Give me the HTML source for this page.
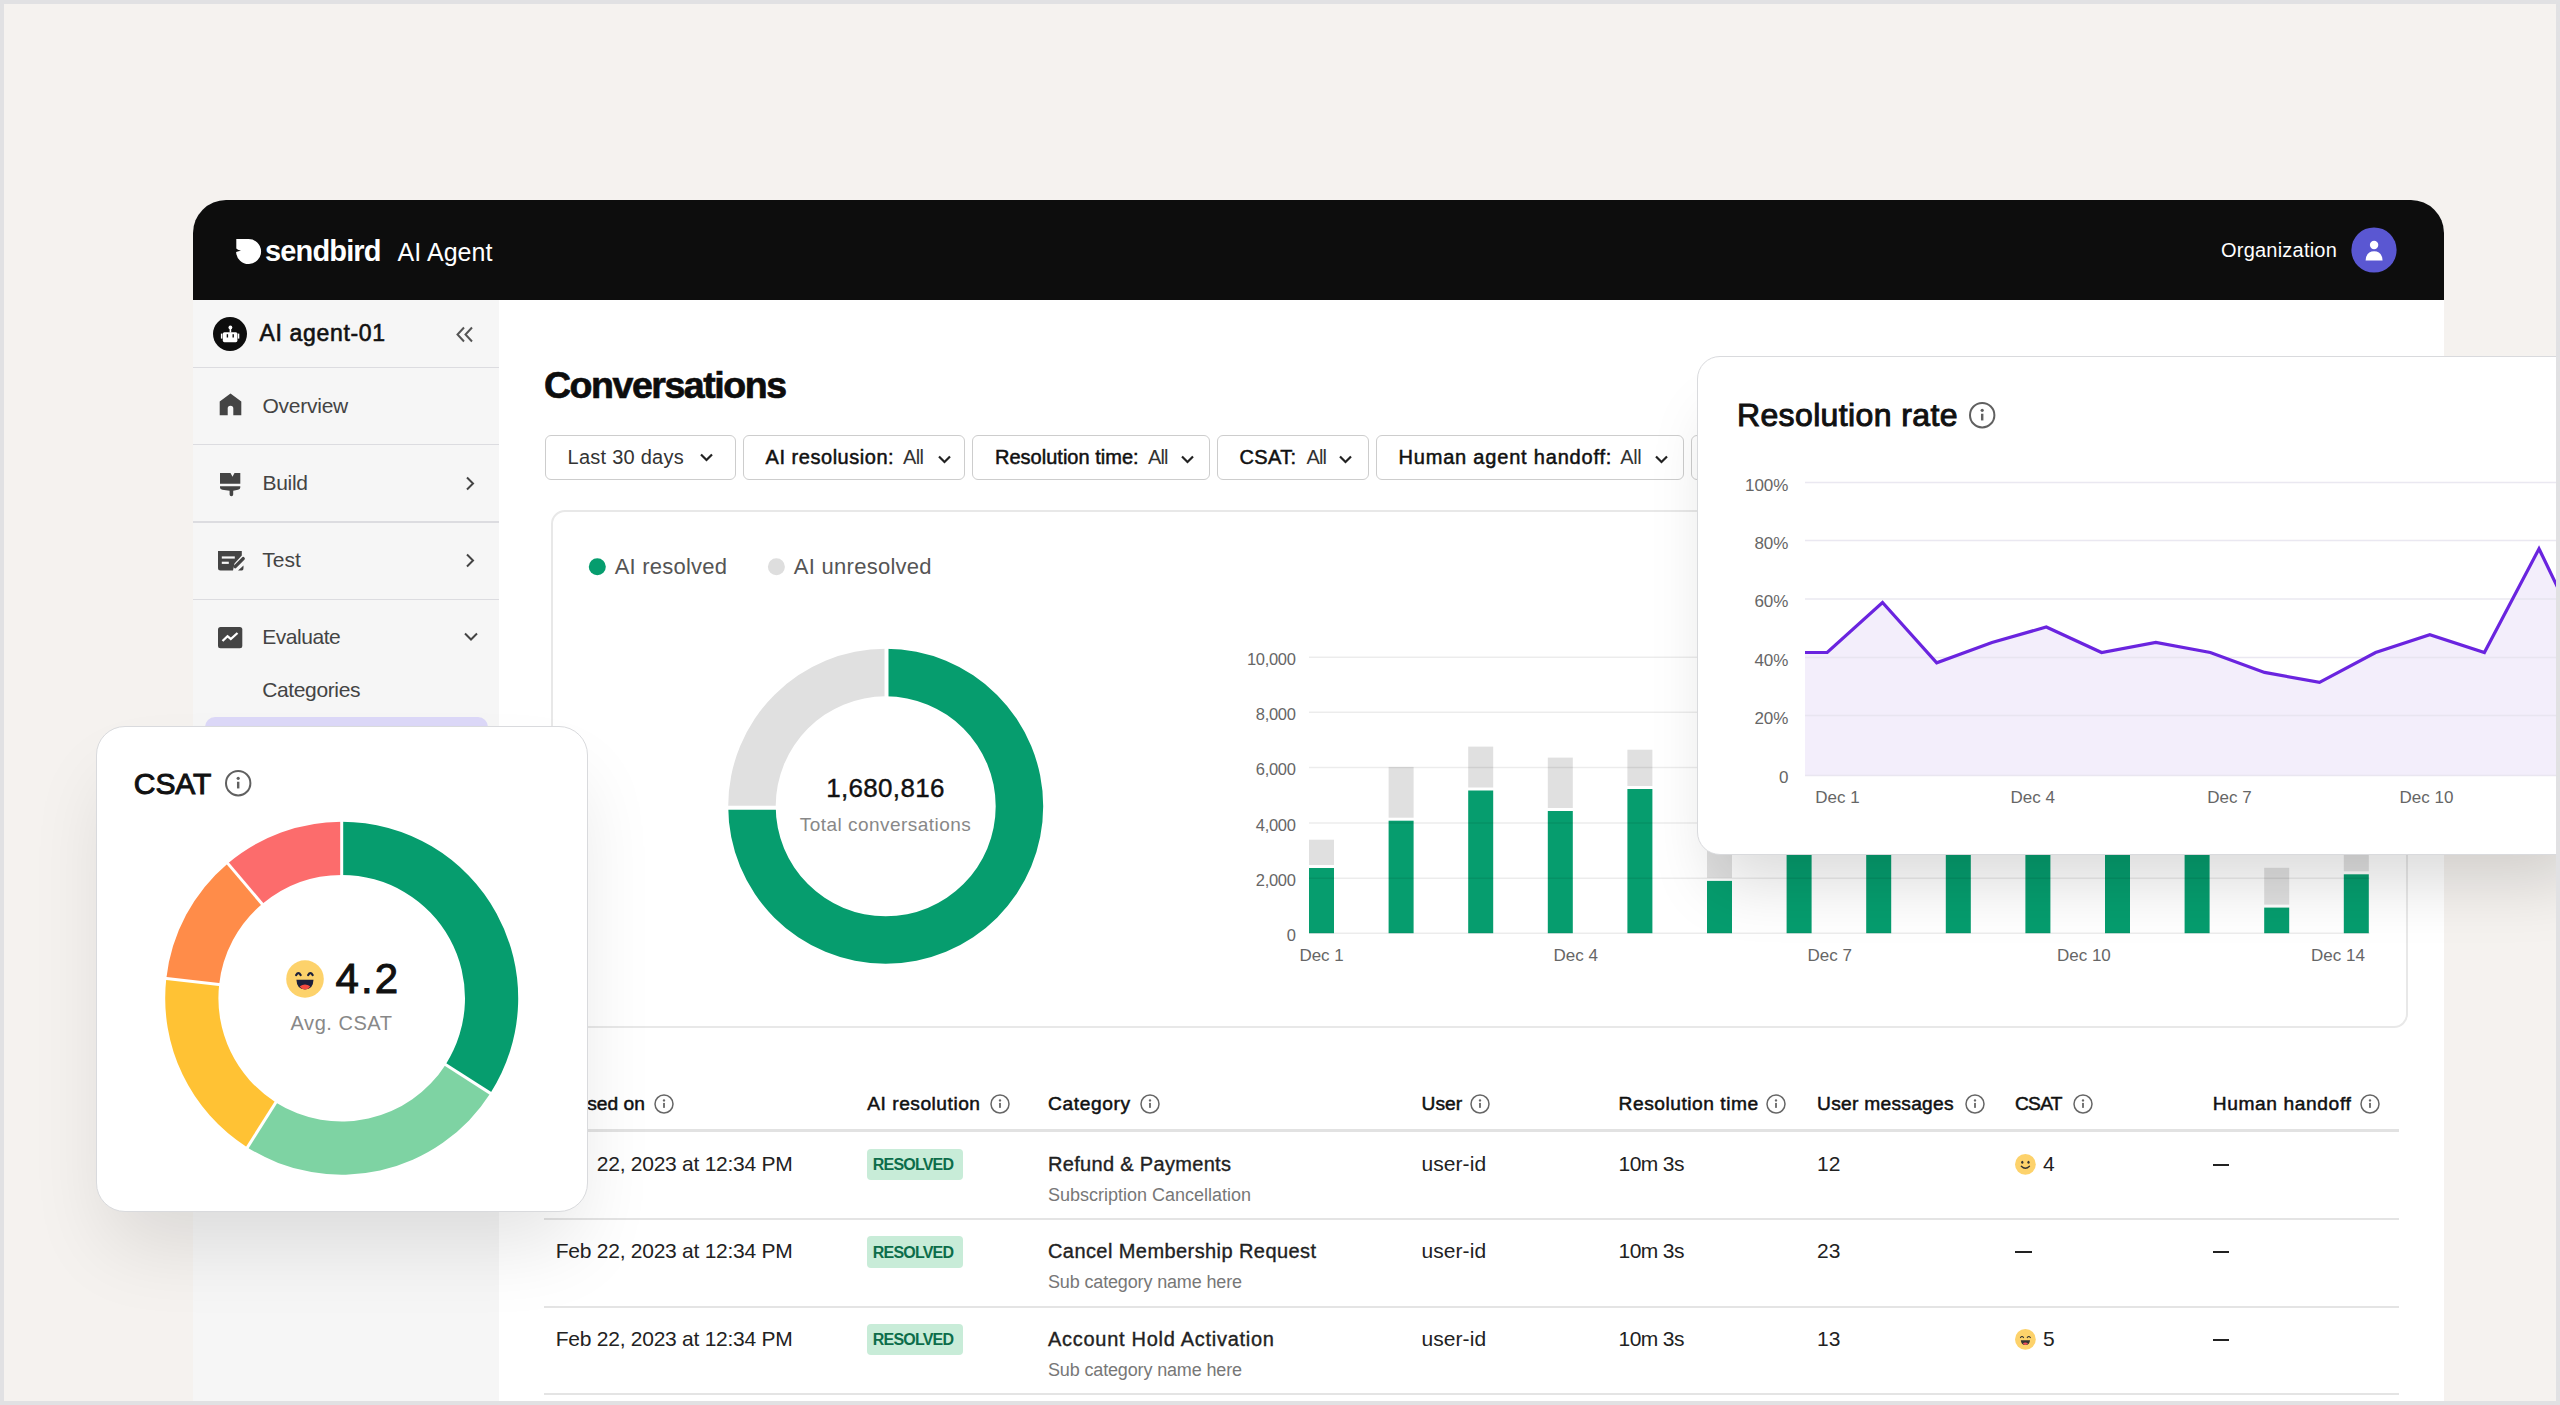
<!DOCTYPE html>
<html><head><meta charset="utf-8"><style>
html,body{margin:0;padding:0;}
body{width:2560px;height:1405px;overflow:hidden;position:relative;background:#f5f2ef;font-family:"Liberation Sans",sans-serif;}
.t{position:absolute;line-height:1;white-space:nowrap;}
svg{position:absolute;overflow:visible;}
</style></head><body>

<div style="position:absolute;left:193px;top:200px;width:2251px;height:1205px;background:#ffffff;border-radius:33px 33px 0 0;overflow:hidden;"></div>
<div style="position:absolute;left:193px;top:200px;width:2251px;height:100px;background:#0d0d0d;border-radius:33px 33px 0 0;"></div>
<div style="position:absolute;left:193px;top:300px;width:306px;height:1105px;background:#f6f6f6;"></div>
<div style="position:absolute;left:193px;top:366.8px;width:306px;height:1.4px;background:#dcdce0;"></div>
<div style="position:absolute;left:193px;top:444.1px;width:306px;height:1.4px;background:#dcdce0;"></div>
<div style="position:absolute;left:193px;top:521.3px;width:306px;height:1.4px;background:#dcdce0;"></div>
<div style="position:absolute;left:193px;top:598.5px;width:306px;height:1.4px;background:#dcdce0;"></div>
<svg style="left:235.5px;top:238.5px" width="26" height="26" viewBox="0 0 26 26"><path d="M0.3 0H12.4A12.5 12.5 0 1 1 0.1 13Q2.6 12 5 11.8Q1.3 11.2 0.3 9.6Z" fill="#fff"/></svg>
<div class="t" style="left:265.0px;top:236.5px;font-size:29px;color:#fff;font-weight:700;letter-spacing:-0.852px;">sendbird</div>
<div class="t" style="left:397.5px;top:239.8px;font-size:25px;color:#fff;font-weight:400;letter-spacing:0.067px;">AI Agent</div>
<div class="t" style="left:2221.0px;top:239.8px;font-size:20px;color:#fff;font-weight:400;letter-spacing:0.218px;">Organization</div>
<svg style="left:2350.5px;top:227px" width="46" height="46" viewBox="0 0 46 46"><circle cx="23" cy="23" r="22.6" fill="#5a57d2"/><circle cx="23.1" cy="18" r="4.2" fill="#fff"/><path d="M14.6 33.4Q15.2 24.2 23.1 24.2Q31 24.2 31.6 33.4Z" fill="#fff"/></svg>
<svg style="left:213px;top:316.5px" width="34" height="34" viewBox="0 0 34 34"><circle cx="17" cy="17" r="17" fill="#0d0d0d"/><rect x="9.8" y="15.2" width="14.6" height="10" rx="1.6" fill="#fff"/><rect x="16.6" y="11" width="1.6" height="4.5" fill="#fff"/><circle cx="17.4" cy="10.4" r="1.9" fill="#fff"/><rect x="7.9" y="16.6" width="1.5" height="5" fill="#fff"/><rect x="24.8" y="16.6" width="1.5" height="5" fill="#fff"/><rect x="13.7" y="17.2" width="1.4" height="3.3" fill="#0d0d0d"/><rect x="19.5" y="17.2" width="1.4" height="3.3" fill="#0d0d0d"/></svg>
<div class="t" style="left:259.5px;top:321.5px;font-size:23px;color:#111;font-weight:400;-webkit-text-stroke:0.6px #111;letter-spacing:0.657px;">AI agent-01</div>
<svg style="left:455px;top:326px" width="20" height="18" viewBox="0 0 20 18"><path d="M9 1.5L2.5 8.5L9 15.5M17 1.5L10.5 8.5L17 15.5" fill="none" stroke="#555" stroke-width="2"/></svg>
<svg style="left:219px;top:393px" width="23" height="23" viewBox="0 0 23 23"><path d="M11.5 0.5L22.3 8.5V22.3H14.3V15.5A2.8 2.8 0 0 0 8.7 15.5V22.3H0.7V8.5Z" fill="#444"/></svg>
<div class="t" style="left:262.5px;top:394.7px;font-size:21px;color:#444;font-weight:400;letter-spacing:-0.253px;">Overview</div>
<svg style="left:219px;top:472px" width="23" height="25" viewBox="0 0 23 25"><path d="M1 1H11.5L13.5 4.7L15.5 1H21.3V11.8H1Z" fill="#444"/><path d="M1 14.3H21.3V15.5Q21.3 17.3 19 17.8L14.2 18.8V22.5A1.8 1.8 0 0 1 10.6 22.5V18.8L3.3 17.8Q1 17.3 1 15.5Z" fill="#444"/></svg>
<div class="t" style="left:262.5px;top:471.7px;font-size:21px;color:#444;font-weight:400;letter-spacing:-0.301px;">Build</div>
<svg style="left:464px;top:476px" width="12" height="16" viewBox="0 0 12 16"><path d="M3 1.5L9 7.5L3 13.5" fill="none" stroke="#444" stroke-width="2"/></svg>
<svg style="left:218px;top:550.8px" width="27" height="20" viewBox="0 0 27 20"><path d="M0 0H23.8V4.5L16.5 12.5L15 19.5H2.5Q0 19.5 0 17Z" fill="#444"/><path d="M20 19.5H23.8Q25.5 19.5 25.5 17V14.5Z" fill="#444"/><rect x="3.8" y="5.4" width="13" height="2.2" fill="#f6f6f6"/><rect x="3.8" y="10.7" width="7" height="2.2" fill="#f6f6f6"/><path d="M17.2 15.6L25.2 7.6" stroke="#444" stroke-width="3.4" stroke-linecap="round" fill="none"/></svg>
<div class="t" style="left:262.2px;top:548.6px;font-size:21px;color:#444;font-weight:400;letter-spacing:0.062px;">Test</div>
<svg style="left:464px;top:553px" width="12" height="16" viewBox="0 0 12 16"><path d="M3 1.5L9 7.5L3 13.5" fill="none" stroke="#444" stroke-width="2"/></svg>
<svg style="left:218px;top:627px" width="25" height="22" viewBox="0 0 25 22"><rect x="0" y="0" width="24.3" height="21.2" rx="2.5" fill="#444"/><path d="M4.5 14L9.5 9.2L12.8 12L19.5 6" stroke="#fff" stroke-width="2.3" fill="none"/></svg>
<div class="t" style="left:262.2px;top:626.0px;font-size:21px;color:#444;font-weight:400;letter-spacing:-0.462px;">Evaluate</div>
<svg style="left:463px;top:631px" width="16" height="12" viewBox="0 0 16 12"><path d="M2 2.5L8 8.5L14 2.5" fill="none" stroke="#444" stroke-width="2"/></svg>
<div class="t" style="left:262.2px;top:678.9px;font-size:21px;color:#444;font-weight:400;letter-spacing:-0.363px;">Categories</div>
<div style="position:absolute;left:205px;top:717px;width:283px;height:60px;background:#dcd8f8;border-radius:10px 10px 0 0;"></div>
<div class="t" style="left:544.0px;top:366.6px;font-size:37.5px;color:#0d0d0d;font-weight:700;letter-spacing:-1.458px;-webkit-text-stroke:0.7px #0d0d0d;">Conversations</div>
<div style="position:absolute;left:544.5px;top:435px;width:189.5px;height:42.5px;border:1px solid #cdcdcd;border-radius:6px;background:#fff;"></div>
<div style="position:absolute;left:743px;top:435px;width:220.3px;height:42.5px;border:1px solid #cdcdcd;border-radius:6px;background:#fff;"></div>
<div style="position:absolute;left:972px;top:435px;width:236.0px;height:42.5px;border:1px solid #cdcdcd;border-radius:6px;background:#fff;"></div>
<div style="position:absolute;left:1217px;top:435px;width:150.0px;height:42.5px;border:1px solid #cdcdcd;border-radius:6px;background:#fff;"></div>
<div style="position:absolute;left:1376px;top:435px;width:306.0px;height:42.5px;border:1px solid #cdcdcd;border-radius:6px;background:#fff;"></div>
<div style="position:absolute;left:1691px;top:435px;width:67.0px;height:42.5px;border:1px solid #cdcdcd;border-radius:6px;background:#fff;"></div>
<div class="t" style="left:567.5px;top:446.8px;font-size:20px;color:#333;font-weight:400;letter-spacing:0.257px;">Last 30 days</div>
<svg style="left:700px;top:453px" width="13" height="9" viewBox="0 0 13 9"><path d="M1 1.5L6.5 7L12 1.5" fill="none" stroke="#222" stroke-width="2.2"/></svg>
<div class="t" style="left:765.6px;top:446.8px;font-size:20px;color:#111;font-weight:400;-webkit-text-stroke:0.5px #111;letter-spacing:0.525px;">AI resolusion:</div>
<div class="t" style="left:903.0px;top:446.8px;font-size:20px;color:#333;font-weight:400;letter-spacing:-0.619px;">All</div>
<svg style="left:937.5px;top:455px" width="13" height="9" viewBox="0 0 13 9"><path d="M1 1.5L6.5 7L12 1.5" fill="none" stroke="#222" stroke-width="2.2"/></svg>
<div class="t" style="left:995.0px;top:446.8px;font-size:20px;color:#111;font-weight:400;-webkit-text-stroke:0.5px #111;letter-spacing:0.013px;">Resolution time:</div>
<div class="t" style="left:1148.0px;top:446.8px;font-size:20px;color:#333;font-weight:400;letter-spacing:-0.916px;">All</div>
<svg style="left:1181px;top:455px" width="13" height="9" viewBox="0 0 13 9"><path d="M1 1.5L6.5 7L12 1.5" fill="none" stroke="#222" stroke-width="2.2"/></svg>
<div class="t" style="left:1239.6px;top:446.8px;font-size:20px;color:#111;font-weight:400;-webkit-text-stroke:0.5px #111;letter-spacing:0.300px;">CSAT:</div>
<div class="t" style="left:1306.6px;top:446.8px;font-size:20px;color:#333;font-weight:400;letter-spacing:-0.916px;">All</div>
<svg style="left:1339px;top:455px" width="13" height="9" viewBox="0 0 13 9"><path d="M1 1.5L6.5 7L12 1.5" fill="none" stroke="#222" stroke-width="2.2"/></svg>
<div class="t" style="left:1398.5px;top:446.8px;font-size:20px;color:#111;font-weight:400;-webkit-text-stroke:0.5px #111;letter-spacing:0.807px;">Human agent handoff:</div>
<div class="t" style="left:1620.2px;top:446.8px;font-size:20px;color:#333;font-weight:400;letter-spacing:-0.319px;">All</div>
<svg style="left:1654.5px;top:455px" width="13" height="9" viewBox="0 0 13 9"><path d="M1 1.5L6.5 7L12 1.5" fill="none" stroke="#222" stroke-width="2.2"/></svg>
<div style="position:absolute;left:551px;top:510px;width:1853px;height:514px;border:2px solid #e8e8e8;border-radius:14px;background:#fff;"></div>
<svg style="left:588px;top:558px" width="20" height="20"><circle cx="9.3" cy="8.7" r="8.5" fill="#069d6e"/></svg>
<div class="t" style="left:614.7px;top:556.1px;font-size:22px;color:#555;font-weight:400;letter-spacing:0.224px;">AI resolved</div>
<svg style="left:767px;top:558px" width="20" height="20"><circle cx="9.4" cy="8.7" r="8.5" fill="#dedede"/></svg>
<div class="t" style="left:793.8px;top:556.1px;font-size:22px;color:#555;font-weight:400;letter-spacing:0.273px;">AI unresolved</div>
<svg style="left:0;top:0" width="2560" height="1405" viewBox="0 0 2560 1405"><path d="M885.70 648.80A157.5 157.5 0 1 1 728.20 806.30L775.70 806.30A110 110 0 1 0 885.70 696.30Z" fill="#069d6e"/><path d="M728.20 806.30A157.5 157.5 0 0 1 885.70 648.80L885.70 696.30A110 110 0 0 0 775.70 806.30Z" fill="#e0e0e0"/><line x1="886.5" y1="646.8" x2="886.5" y2="698.3" stroke="#fff" stroke-width="4"/><line x1="726.2" y1="807.8" x2="777.7" y2="807.8" stroke="#fff" stroke-width="4"/><rect x="1309.0" y="839.7" width="25" height="25.3" fill="#e0e0e0"/><rect x="1309.0" y="868" width="25" height="65.2" fill="#069d6e"/><rect x="1388.6" y="766.9" width="25" height="50.8" fill="#e0e0e0"/><rect x="1388.6" y="820.7" width="25" height="112.5" fill="#069d6e"/><rect x="1468.2" y="746.6" width="25" height="40.9" fill="#e0e0e0"/><rect x="1468.2" y="790.5" width="25" height="142.7" fill="#069d6e"/><rect x="1547.8" y="757.6" width="25" height="50.4" fill="#e0e0e0"/><rect x="1547.8" y="811" width="25" height="122.2" fill="#069d6e"/><rect x="1627.4" y="749.7" width="25" height="36.3" fill="#e0e0e0"/><rect x="1627.4" y="789" width="25" height="144.2" fill="#069d6e"/><rect x="1707.0" y="850.7" width="25" height="27.2" fill="#e0e0e0"/><rect x="1707.0" y="880.9" width="25" height="52.3" fill="#069d6e"/><rect x="1786.6" y="760" width="25" height="37.0" fill="#e0e0e0"/><rect x="1786.6" y="800" width="25" height="133.2" fill="#069d6e"/><rect x="1866.2" y="770" width="25" height="37.0" fill="#e0e0e0"/><rect x="1866.2" y="810" width="25" height="123.2" fill="#069d6e"/><rect x="1945.8" y="755" width="25" height="37.0" fill="#e0e0e0"/><rect x="1945.8" y="795" width="25" height="138.2" fill="#069d6e"/><rect x="2025.4" y="765" width="25" height="37.0" fill="#e0e0e0"/><rect x="2025.4" y="805" width="25" height="128.2" fill="#069d6e"/><rect x="2105.0" y="750" width="25" height="37.0" fill="#e0e0e0"/><rect x="2105.0" y="790" width="25" height="143.2" fill="#069d6e"/><rect x="2184.6" y="745" width="25" height="37.0" fill="#e0e0e0"/><rect x="2184.6" y="785" width="25" height="148.2" fill="#069d6e"/><rect x="2264.2" y="867.8" width="25" height="36.8" fill="#e0e0e0"/><rect x="2264.2" y="907.6" width="25" height="25.6" fill="#069d6e"/><rect x="2343.8" y="840" width="25" height="31.3" fill="#e0e0e0"/><rect x="2343.8" y="874.3" width="25" height="58.9" fill="#069d6e"/><line x1="1309" y1="657.2" x2="2369.5" y2="657.2" stroke="rgba(0,0,0,0.075)" stroke-width="1.5"/><line x1="1309" y1="712.3" x2="2369.5" y2="712.3" stroke="rgba(0,0,0,0.075)" stroke-width="1.5"/><line x1="1309" y1="767.6" x2="2369.5" y2="767.6" stroke="rgba(0,0,0,0.075)" stroke-width="1.5"/><line x1="1309" y1="823" x2="2369.5" y2="823" stroke="rgba(0,0,0,0.075)" stroke-width="1.5"/><line x1="1309" y1="878.3" x2="2369.5" y2="878.3" stroke="rgba(0,0,0,0.075)" stroke-width="1.5"/><line x1="1309" y1="933.2" x2="2369.5" y2="933.2" stroke="rgba(0,0,0,0.075)" stroke-width="1.5"/></svg>
<div class="t" style="left:885.5px;top:775.0px;font-size:26px;color:#111;font-weight:400;-webkit-text-stroke:0.4px #111;transform:translateX(-50%);letter-spacing:0.291px;">1,680,816</div>
<div class="t" style="left:885.5px;top:815.4px;font-size:19px;color:#888;font-weight:400;transform:translateX(-50%);letter-spacing:0.464px;">Total conversations</div>
<div class="t" style="right:1264.4px;top:651.0px;font-size:16.5px;color:#666;font-weight:400;letter-spacing:-0.3px;">10,000</div>
<div class="t" style="right:1264.4px;top:706.0px;font-size:16.5px;color:#666;font-weight:400;letter-spacing:-0.3px;">8,000</div>
<div class="t" style="right:1264.4px;top:761.3px;font-size:16.5px;color:#666;font-weight:400;letter-spacing:-0.3px;">6,000</div>
<div class="t" style="right:1264.4px;top:816.7px;font-size:16.5px;color:#666;font-weight:400;letter-spacing:-0.3px;">4,000</div>
<div class="t" style="right:1264.4px;top:872.0px;font-size:16.5px;color:#666;font-weight:400;letter-spacing:-0.3px;">2,000</div>
<div class="t" style="right:1264.4px;top:927.0px;font-size:16.5px;color:#666;font-weight:400;letter-spacing:-0.3px;">0</div>
<div class="t" style="left:1321.6px;top:947.1px;font-size:17px;color:#666;font-weight:400;transform:translateX(-50%);">Dec 1</div>
<div class="t" style="left:1575.7px;top:947.1px;font-size:17px;color:#666;font-weight:400;transform:translateX(-50%);">Dec 4</div>
<div class="t" style="left:1829.8px;top:947.1px;font-size:17px;color:#666;font-weight:400;transform:translateX(-50%);">Dec 7</div>
<div class="t" style="left:2083.9px;top:947.1px;font-size:17px;color:#666;font-weight:400;transform:translateX(-50%);">Dec 10</div>
<div class="t" style="left:2338.0px;top:947.1px;font-size:17px;color:#666;font-weight:400;transform:translateX(-50%);">Dec 14</div>
<div class="t" style="right:1915.2px;top:1093.6px;font-size:19.2px;color:#111;font-weight:400;-webkit-text-stroke:0.5px #111;">Closed on</div>
<svg style="left:652.8px;top:1092.5px" width="22.0" height="22.0" viewBox="-11.0 -11.0 22.0 22.0"><circle cx="0" cy="0" r="9.0" fill="none" stroke="#666" stroke-width="1.5"/><rect x="-0.90" y="-1.08" width="1.80" height="4.95" fill="#666"/><circle cx="0" cy="-3.60" r="1.17" fill="#666"/></svg>
<div class="t" style="left:867.3px;top:1093.6px;font-size:19.2px;color:#111;font-weight:400;-webkit-text-stroke:0.5px #111;letter-spacing:0.503px;">AI resolution</div>
<svg style="left:988.6px;top:1092.5px" width="22.0" height="22.0" viewBox="-11.0 -11.0 22.0 22.0"><circle cx="0" cy="0" r="9.0" fill="none" stroke="#666" stroke-width="1.5"/><rect x="-0.90" y="-1.08" width="1.80" height="4.95" fill="#666"/><circle cx="0" cy="-3.60" r="1.17" fill="#666"/></svg>
<div class="t" style="left:1048.0px;top:1093.6px;font-size:19.2px;color:#111;font-weight:400;-webkit-text-stroke:0.5px #111;letter-spacing:0.619px;">Category</div>
<svg style="left:1139.0px;top:1092.5px" width="22.0" height="22.0" viewBox="-11.0 -11.0 22.0 22.0"><circle cx="0" cy="0" r="9.0" fill="none" stroke="#666" stroke-width="1.5"/><rect x="-0.90" y="-1.08" width="1.80" height="4.95" fill="#666"/><circle cx="0" cy="-3.60" r="1.17" fill="#666"/></svg>
<div class="t" style="left:1421.5px;top:1093.6px;font-size:19.2px;color:#111;font-weight:400;-webkit-text-stroke:0.5px #111;letter-spacing:0.025px;">User</div>
<svg style="left:1469.0px;top:1092.5px" width="22.0" height="22.0" viewBox="-11.0 -11.0 22.0 22.0"><circle cx="0" cy="0" r="9.0" fill="none" stroke="#666" stroke-width="1.5"/><rect x="-0.90" y="-1.08" width="1.80" height="4.95" fill="#666"/><circle cx="0" cy="-3.60" r="1.17" fill="#666"/></svg>
<div class="t" style="left:1618.6px;top:1093.6px;font-size:19.2px;color:#111;font-weight:400;-webkit-text-stroke:0.5px #111;letter-spacing:0.525px;">Resolution time</div>
<svg style="left:1765.0px;top:1092.5px" width="22.0" height="22.0" viewBox="-11.0 -11.0 22.0 22.0"><circle cx="0" cy="0" r="9.0" fill="none" stroke="#666" stroke-width="1.5"/><rect x="-0.90" y="-1.08" width="1.80" height="4.95" fill="#666"/><circle cx="0" cy="-3.60" r="1.17" fill="#666"/></svg>
<div class="t" style="left:1817.0px;top:1093.6px;font-size:19.2px;color:#111;font-weight:400;-webkit-text-stroke:0.5px #111;letter-spacing:0.275px;">User messages</div>
<svg style="left:1963.7px;top:1092.5px" width="22.0" height="22.0" viewBox="-11.0 -11.0 22.0 22.0"><circle cx="0" cy="0" r="9.0" fill="none" stroke="#666" stroke-width="1.5"/><rect x="-0.90" y="-1.08" width="1.80" height="4.95" fill="#666"/><circle cx="0" cy="-3.60" r="1.17" fill="#666"/></svg>
<div class="t" style="left:2015.0px;top:1093.6px;font-size:19.2px;color:#111;font-weight:400;-webkit-text-stroke:0.5px #111;letter-spacing:-0.751px;">CSAT</div>
<svg style="left:2071.8px;top:1092.5px" width="22.0" height="22.0" viewBox="-11.0 -11.0 22.0 22.0"><circle cx="0" cy="0" r="9.0" fill="none" stroke="#666" stroke-width="1.5"/><rect x="-0.90" y="-1.08" width="1.80" height="4.95" fill="#666"/><circle cx="0" cy="-3.60" r="1.17" fill="#666"/></svg>
<div class="t" style="left:2212.8px;top:1093.6px;font-size:19.2px;color:#111;font-weight:400;-webkit-text-stroke:0.5px #111;letter-spacing:0.595px;">Human handoff</div>
<svg style="left:2358.8px;top:1092.5px" width="22.0" height="22.0" viewBox="-11.0 -11.0 22.0 22.0"><circle cx="0" cy="0" r="9.0" fill="none" stroke="#666" stroke-width="1.5"/><rect x="-0.90" y="-1.08" width="1.80" height="4.95" fill="#666"/><circle cx="0" cy="-3.60" r="1.17" fill="#666"/></svg>
<div style="position:absolute;left:544px;top:1129px;width:1855px;height:2.5px;background:#e2e2e2;"></div>
<div class="t" style="left:555.8px;top:1152.7px;font-size:21px;color:#222;font-weight:400;letter-spacing:-0.254px;">Feb 22, 2023 at 12:34 PM</div>
<div style="position:absolute;left:866.6px;top:1148.9px;width:96.2px;height:31.6px;background:#c8ecd8;border-radius:4px;"></div>
<div class="t" style="left:872.8px;top:1157.0px;font-size:16px;color:#0c6d4a;font-weight:700;letter-spacing:-0.804px;">RESOLVED</div>
<div class="t" style="left:1048.0px;top:1153.6px;font-size:20px;color:#222;font-weight:400;-webkit-text-stroke:0.35px #222;letter-spacing:0.320px;">Refund &amp; Payments</div>
<div class="t" style="left:1048.0px;top:1185.6px;font-size:18px;color:#777;font-weight:400;letter-spacing:-0.005px;">Subscription Cancellation</div>
<div class="t" style="left:1421.5px;top:1152.7px;font-size:21px;color:#222;font-weight:400;letter-spacing:0.066px;">user-id</div>
<div class="t" style="left:1618.6px;top:1152.7px;font-size:21px;color:#222;font-weight:400;letter-spacing:-0.614px;">10m 3s</div>
<div class="t" style="left:1817.0px;top:1152.7px;font-size:21px;color:#222;font-weight:400;">12</div>
<svg style="left:2014.9px;top:1153.5px" width="21" height="21" viewBox="0 0 21 21"><circle cx="10.4" cy="10.4" r="10.4" fill="#fdd26b"/><ellipse cx="7.3" cy="8.3" rx="1.1" ry="1.5" fill="#333"/><ellipse cx="13.5" cy="8.3" rx="1.1" ry="1.5" fill="#333"/><path d="M6.3 12.3Q10.4 16.3 14.5 12.3" stroke="#333" stroke-width="1.3" fill="none" stroke-linecap="round"/></svg>
<div class="t" style="left:2043.0px;top:1152.7px;font-size:21px;color:#222;font-weight:400;">4</div>
<div style="position:absolute;left:2212.8px;top:1163.5px;width:16.2px;height:2px;background:#222;"></div>
<div style="position:absolute;left:544px;top:1218.0px;width:1855px;height:2px;background:#e4e4e4;"></div>
<div class="t" style="left:555.8px;top:1240.2px;font-size:21px;color:#222;font-weight:400;letter-spacing:-0.254px;">Feb 22, 2023 at 12:34 PM</div>
<div style="position:absolute;left:866.6px;top:1236.4px;width:96.2px;height:31.6px;background:#c8ecd8;border-radius:4px;"></div>
<div class="t" style="left:872.8px;top:1244.5px;font-size:16px;color:#0c6d4a;font-weight:700;letter-spacing:-0.804px;">RESOLVED</div>
<div class="t" style="left:1048.0px;top:1241.1px;font-size:20px;color:#222;font-weight:400;-webkit-text-stroke:0.35px #222;letter-spacing:0.421px;">Cancel Membership Request</div>
<div class="t" style="left:1048.0px;top:1273.1px;font-size:18px;color:#777;font-weight:400;letter-spacing:-0.149px;">Sub category name here</div>
<div class="t" style="left:1421.5px;top:1240.2px;font-size:21px;color:#222;font-weight:400;letter-spacing:0.066px;">user-id</div>
<div class="t" style="left:1618.6px;top:1240.2px;font-size:21px;color:#222;font-weight:400;letter-spacing:-0.614px;">10m 3s</div>
<div class="t" style="left:1817.0px;top:1240.2px;font-size:21px;color:#222;font-weight:400;">23</div>
<div style="position:absolute;left:2015px;top:1251px;width:17px;height:2px;background:#222;"></div>
<div style="position:absolute;left:2212.8px;top:1251px;width:16.2px;height:2px;background:#222;"></div>
<div style="position:absolute;left:544px;top:1305.5px;width:1855px;height:2px;background:#e4e4e4;"></div>
<div class="t" style="left:555.8px;top:1327.7px;font-size:21px;color:#222;font-weight:400;letter-spacing:-0.254px;">Feb 22, 2023 at 12:34 PM</div>
<div style="position:absolute;left:866.6px;top:1323.9px;width:96.2px;height:31.6px;background:#c8ecd8;border-radius:4px;"></div>
<div class="t" style="left:872.8px;top:1332.0px;font-size:16px;color:#0c6d4a;font-weight:700;letter-spacing:-0.804px;">RESOLVED</div>
<div class="t" style="left:1048.0px;top:1328.6px;font-size:20px;color:#222;font-weight:400;-webkit-text-stroke:0.35px #222;letter-spacing:0.717px;">Account Hold Activation</div>
<div class="t" style="left:1048.0px;top:1360.6px;font-size:18px;color:#777;font-weight:400;letter-spacing:-0.149px;">Sub category name here</div>
<div class="t" style="left:1421.5px;top:1327.7px;font-size:21px;color:#222;font-weight:400;letter-spacing:0.067px;">user-id</div>
<div class="t" style="left:1618.6px;top:1327.7px;font-size:21px;color:#222;font-weight:400;letter-spacing:-0.614px;">10m 3s</div>
<div class="t" style="left:1817.0px;top:1327.7px;font-size:21px;color:#222;font-weight:400;">13</div>
<svg style="left:2014.9px;top:1328.5px" width="21" height="21" viewBox="0 0 21 21"><circle cx="10.4" cy="10.4" r="10.4" fill="#fdd26b"/><path d="M5.5 8.5Q7 6.5 8.5 8.5M12.3 8.5Q13.8 6.5 15.3 8.5" stroke="#333" stroke-width="1.2" fill="none" stroke-linecap="round"/><path d="M5.8 11.2H15Q14.8 16 10.4 16Q6 16 5.8 11.2Z" fill="#333"/><path d="M7.8 14.3Q10.4 12.8 13 14.3Q12 16 10.4 16Q8.8 16 7.8 14.3Z" fill="#f0505a"/></svg>
<div class="t" style="left:2043.0px;top:1327.7px;font-size:21px;color:#222;font-weight:400;">5</div>
<div style="position:absolute;left:2212.8px;top:1338.5px;width:16.2px;height:2px;background:#222;"></div>
<div style="position:absolute;left:544px;top:1393.0px;width:1855px;height:2px;background:#e4e4e4;"></div>
<div style="position:absolute;left:586px;top:1145px;width:9px;height:30px;background:#fff;"></div>
<div style="position:absolute;left:96px;top:725.5px;width:490px;height:484px;border:1px solid #d9dadd;border-radius:29px;background:#fff;box-shadow:0 44px 80px -12px rgba(0,0,0,0.11);"></div>
<div class="t" style="left:133.8px;top:768.8px;font-size:30px;color:#111;font-weight:400;-webkit-text-stroke:1.0px #111;letter-spacing:-0.065px;">CSAT</div>
<svg style="left:223.8px;top:769.2px" width="28.4" height="28.4" viewBox="-14.2 -14.2 28.4 28.4"><circle cx="0" cy="0" r="12.2" fill="none" stroke="#606060" stroke-width="2"/><rect x="-1.22" y="-1.46" width="2.44" height="6.71" fill="#606060"/><circle cx="0" cy="-4.88" r="1.59" fill="#606060"/></svg>
<svg style="left:0;top:0" width="2560" height="1405" viewBox="0 0 2560 1405"><path d="M341.70 821.70A176.5 176.5 0 0 1 490.39 1093.29L445.57 1064.63A123.3 123.3 0 0 0 341.70 874.90Z" fill="#069d6e"/><path d="M490.39 1093.29A176.5 176.5 0 0 1 247.39 1147.39L275.81 1102.42A123.3 123.3 0 0 0 445.57 1064.63Z" fill="#7ed3a3"/><path d="M247.39 1147.39A176.5 176.5 0 0 1 166.30 978.53L219.17 984.46A123.3 123.3 0 0 0 275.81 1102.42Z" fill="#ffc234"/><path d="M166.30 978.53A176.5 176.5 0 0 1 227.78 863.39L262.12 904.02A123.3 123.3 0 0 0 219.17 984.46Z" fill="#ff8c49"/><path d="M227.78 863.39A176.5 176.5 0 0 1 341.70 821.70L341.70 874.90A123.3 123.3 0 0 0 262.12 904.02Z" fill="#fc6c6c"/><line x1="341.70" y1="876.90" x2="341.70" y2="819.70" stroke="#fff" stroke-width="3"/><line x1="443.89" y1="1063.55" x2="492.08" y2="1094.37" stroke="#fff" stroke-width="3"/><line x1="276.88" y1="1100.73" x2="246.32" y2="1149.08" stroke="#fff" stroke-width="3"/><line x1="221.16" y1="984.68" x2="164.31" y2="978.30" stroke="#fff" stroke-width="3"/><line x1="263.41" y1="905.55" x2="226.49" y2="861.86" stroke="#fff" stroke-width="3"/></svg>
<svg style="left:286px;top:959.5px" width="38" height="38" viewBox="0 0 38 38"><circle cx="19" cy="19" r="18.8" fill="#fdd26b"/><path d="M10.2 15Q12.4 11.2 14.6 15M22.2 15Q24.4 11.2 26.6 15" stroke="#1b1f3b" stroke-width="2.3" fill="none" stroke-linecap="round"/><path d="M10.4 19.8H27.5Q27.2 29.5 19 29.5Q10.8 29.5 10.4 19.8Z" fill="#1b1f3b"/><path d="M13.8 26.2Q19 23 24.2 26.2Q22.2 29.5 19 29.5Q15.8 29.5 13.8 26.2Z" fill="#f44b3f"/></svg>
<div class="t" style="left:335.6px;top:957.6px;font-size:42px;color:#111;font-weight:400;-webkit-text-stroke:1.0px #111;letter-spacing:2.006px;">4.2</div>
<div class="t" style="left:290.6px;top:1012.9px;font-size:20px;color:#888;font-weight:400;letter-spacing:0.540px;">Avg. CSAT</div>
<div style="position:absolute;left:1697px;top:355.5px;width:900px;height:497px;border:1px solid #d9dadd;border-radius:23px;background:#fff;box-shadow:0 45px 65px -18px rgba(0,0,0,0.15);"></div>
<div class="t" style="left:1736.9px;top:398.7px;font-size:32px;color:#111;font-weight:400;-webkit-text-stroke:1.0px #111;letter-spacing:0.383px;">Resolution rate</div>
<svg style="left:1967.8px;top:400.8px" width="28.4" height="28.4" viewBox="-14.2 -14.2 28.4 28.4"><circle cx="0" cy="0" r="12.2" fill="none" stroke="#606060" stroke-width="2"/><rect x="-1.22" y="-1.46" width="2.44" height="6.71" fill="#606060"/><circle cx="0" cy="-4.88" r="1.59" fill="#606060"/></svg>
<svg style="left:0;top:0" width="2560" height="1405" viewBox="0 0 2560 1405"><polygon points="1805,775.4 1805,652.5 1827.2,652.5 1882.5,602.5 1936.7,662.8 1992,642.5 2046.3,627 2101.6,652.5 2155.8,642.5 2210.3,652.5 2264.5,672.4 2319.5,682.4 2375.6,652.5 2429.8,634.8 2484.4,652.5 2539,548.7 2580,634 2580,775.4" fill="#f3eefb"/><line x1="1805" y1="482.6" x2="2560" y2="482.6" stroke="#e6e3ee" stroke-width="1.5" opacity=".8"/><line x1="1805" y1="540.6" x2="2560" y2="540.6" stroke="#e6e3ee" stroke-width="1.5" opacity=".8"/><line x1="1805" y1="599" x2="2560" y2="599" stroke="#e6e3ee" stroke-width="1.5" opacity=".8"/><line x1="1805" y1="657.5" x2="2560" y2="657.5" stroke="#e6e3ee" stroke-width="1.5" opacity=".8"/><line x1="1805" y1="715.5" x2="2560" y2="715.5" stroke="#e6e3ee" stroke-width="1.5" opacity=".8"/><line x1="1805" y1="775.4" x2="2560" y2="775.4" stroke="#e6e3ee" stroke-width="1.5" opacity=".8"/><polyline points="1805,652.5 1827.2,652.5 1882.5,602.5 1936.7,662.8 1992,642.5 2046.3,627 2101.6,652.5 2155.8,642.5 2210.3,652.5 2264.5,672.4 2319.5,682.4 2375.6,652.5 2429.8,634.8 2484.4,652.5 2539,548.7 2580,634" fill="none" stroke="#6a24df" stroke-width="3.2" stroke-linejoin="miter"/></svg>
<div class="t" style="right:771.6px;top:476.6px;font-size:17px;color:#666;font-weight:400;">100%</div>
<div class="t" style="right:771.6px;top:534.6px;font-size:17px;color:#666;font-weight:400;">80%</div>
<div class="t" style="right:771.6px;top:593.0px;font-size:17px;color:#666;font-weight:400;">60%</div>
<div class="t" style="right:771.6px;top:651.5px;font-size:17px;color:#666;font-weight:400;">40%</div>
<div class="t" style="right:771.6px;top:709.5px;font-size:17px;color:#666;font-weight:400;">20%</div>
<div class="t" style="right:771.6px;top:769.4px;font-size:17px;color:#666;font-weight:400;">0</div>
<div class="t" style="left:1815.3px;top:788.6px;font-size:17px;color:#666;font-weight:400;">Dec 1</div>
<div class="t" style="left:2010.5px;top:788.6px;font-size:17px;color:#666;font-weight:400;">Dec 4</div>
<div class="t" style="left:2207.3px;top:788.6px;font-size:17px;color:#666;font-weight:400;">Dec 7</div>
<div class="t" style="left:2399.5px;top:788.6px;font-size:17px;color:#666;font-weight:400;">Dec 10</div>
<div style="position:absolute;left:0px;top:0px;width:2560px;height:4px;background:#e1e1e3;"></div>
<div style="position:absolute;left:0px;top:1401px;width:2560px;height:4px;background:#e1e1e3;"></div>
<div style="position:absolute;left:0px;top:0px;width:4px;height:1405px;background:#e1e1e3;"></div>
<div style="position:absolute;left:2556px;top:0px;width:4px;height:1405px;background:#e1e1e3;"></div>
</body></html>
